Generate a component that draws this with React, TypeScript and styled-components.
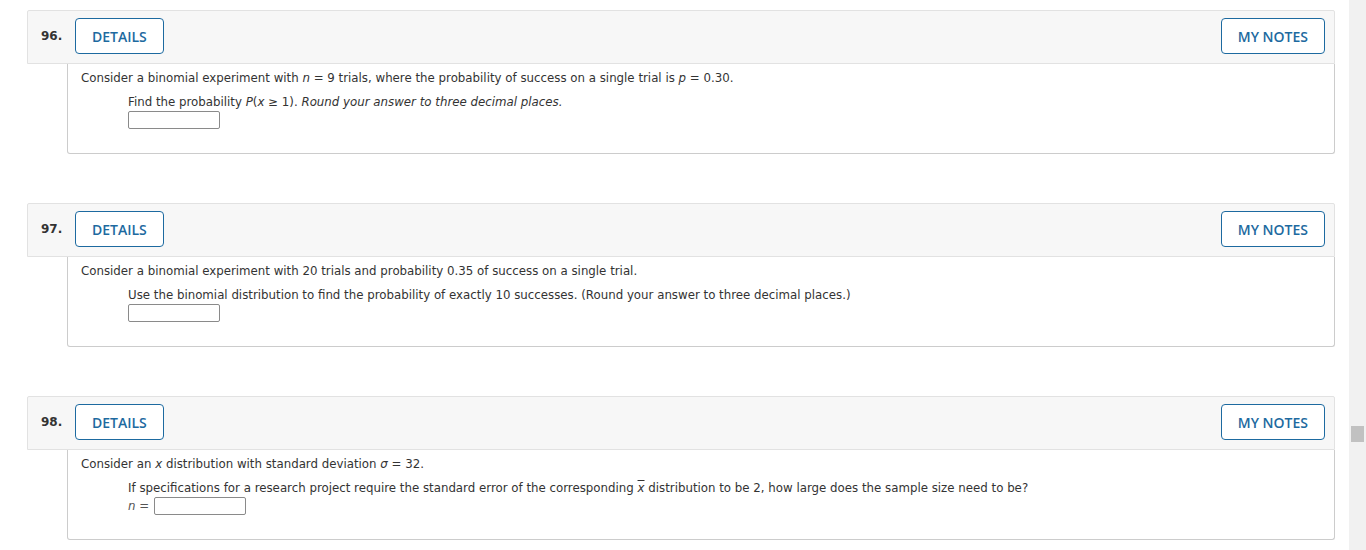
import React from 'react';
import styled, { createGlobalStyle } from 'styled-components';

const GlobalStyle = createGlobalStyle`
  html, body {
    margin: 0;
    padding: 0;
    background: #ffffff;
    overflow: hidden;
  }
`;

const Var = styled.i`
  font-style: italic;
`;

const Bar = styled.i`
  font-style: italic;
  text-decoration: overline;
`;

const Page = styled.div`
  display: flex;
  width: 1366px;
  height: 550px;
  overflow: hidden;
  font-family: 'DejaVu Sans', Verdana, sans-serif;
  color: #333333;
`;

const Main = styled.main`
  flex: 1;
  padding: 10px 14px 0 27px;
`;

const QuestionBlock = styled.section`
  margin-bottom: 49px;
`;

const Header = styled.div`
  display: flex;
  align-items: center;
  height: 54px;
  box-sizing: border-box;
  padding: 0 9px 2px 13px;
  background: #f7f7f7;
  border: 1px solid #e2e2e2;
  border-radius: 2px 2px 0 0;
`;

const Number = styled.span`
  width: 34px;
  font-size: 12px;
  font-weight: bold;
  color: #333333;
`;

const Spacer = styled.div`
  flex: 1;
`;

const OutlineButton = styled.button`
  height: 36px;
  padding: 0 16px;
  background: #ffffff;
  border: 1px solid #1d6aa0;
  border-radius: 4px;
  color: #1d6aa0;
  font-family: 'Open Sans', sans-serif;
  font-size: 14px;
  font-weight: 600;
  cursor: pointer;
`;

const Body = styled.div`
  margin-left: 40px;
  height: 90px;
  box-sizing: border-box;
  padding: 6px 13px 0 13px;
  border: 1px solid #cccccc;
  border-top: none;
  border-radius: 0 0 3px 3px;
  background: #ffffff;
`;

const Intro = styled.p`
  margin: 0;
  font-size: 11.8px;
  line-height: 16px;
`;

const Part = styled.div`
  margin-left: 47px;
  margin-top: 8px;
`;

const Prompt = styled.p`
  margin: 0;
  font-size: 11.8px;
  line-height: 16px;
`;

const AnswerRow = styled.div`
  display: flex;
  align-items: center;
  margin-top: 1px;
`;

const Label = styled.span`
  font-size: 11.8px;
  color: #555555;
  margin-right: 5px;
  white-space: pre;
`;

const AnswerInput = styled.input`
  width: 92px;
  height: 18px;
  box-sizing: border-box;
  margin: 0;
  padding: 0 3px;
  border: 1px solid #8a8a8a;
  border-radius: 2px;
  background: #ffffff;
  font-size: 12px;
`;

const ScrollTrack = styled.div`
  width: 17px;
  height: 550px;
  background: #f1f1f1;
  display: flex;
  justify-content: center;
`;

const ScrollThumb = styled.div`
  width: 13px;
  height: 16px;
  margin-top: 426px;
  background: #c1c1c1;
`;

type Question = {
  number: string;
  intro: React.ReactNode;
  prompt: React.ReactNode;
  label?: React.ReactNode;
};

const questions: Question[] = [
  {
    number: '96.',
    intro: (
      <>
        Consider a binomial experiment with <Var>n</Var> = 9 trials, where the probability of success on a
        single trial is <Var>p</Var> = 0.30.
      </>
    ),
    prompt: (
      <>
        Find the probability <Var>P</Var>(<Var>x</Var> ≥ 1). <Var>Round your answer to three decimal places.</Var>
      </>
    ),
  },
  {
    number: '97.',
    intro: <>Consider a binomial experiment with 20 trials and probability 0.35 of success on a single trial.</>,
    prompt: (
      <>Use the binomial distribution to find the probability of exactly 10 successes. (Round your answer to three decimal places.)</>
    ),
  },
  {
    number: '98.',
    intro: (
      <>
        Consider an <Var>x</Var> distribution with standard deviation <Var>σ</Var> = 32.
      </>
    ),
    prompt: (
      <>
        If specifications for a research project require the standard error of the corresponding{' '}
        <Bar>x</Bar> distribution to be 2, how large does the sample size need to be?
      </>
    ),
    label: (
      <>
        <Var>n</Var> =
      </>
    ),
  },
];

export default function App() {
  return (
    <>
      <GlobalStyle />
      <Page>
        <Main>
          {questions.map((q) => (
            <QuestionBlock key={q.number}>
              <Header>
                <Number>{q.number}</Number>
                <OutlineButton>DETAILS</OutlineButton>
                <Spacer />
                <OutlineButton>MY NOTES</OutlineButton>
              </Header>
              <Body>
                <Intro>{q.intro}</Intro>
                <Part>
                  <Prompt>{q.prompt}</Prompt>
                  <AnswerRow>
                    {q.label && <Label>{q.label}</Label>}
                    <AnswerInput type="text" />
                  </AnswerRow>
                </Part>
              </Body>
            </QuestionBlock>
          ))}
        </Main>
        <ScrollTrack>
          <ScrollThumb />
        </ScrollTrack>
      </Page>
    </>
  );
}
